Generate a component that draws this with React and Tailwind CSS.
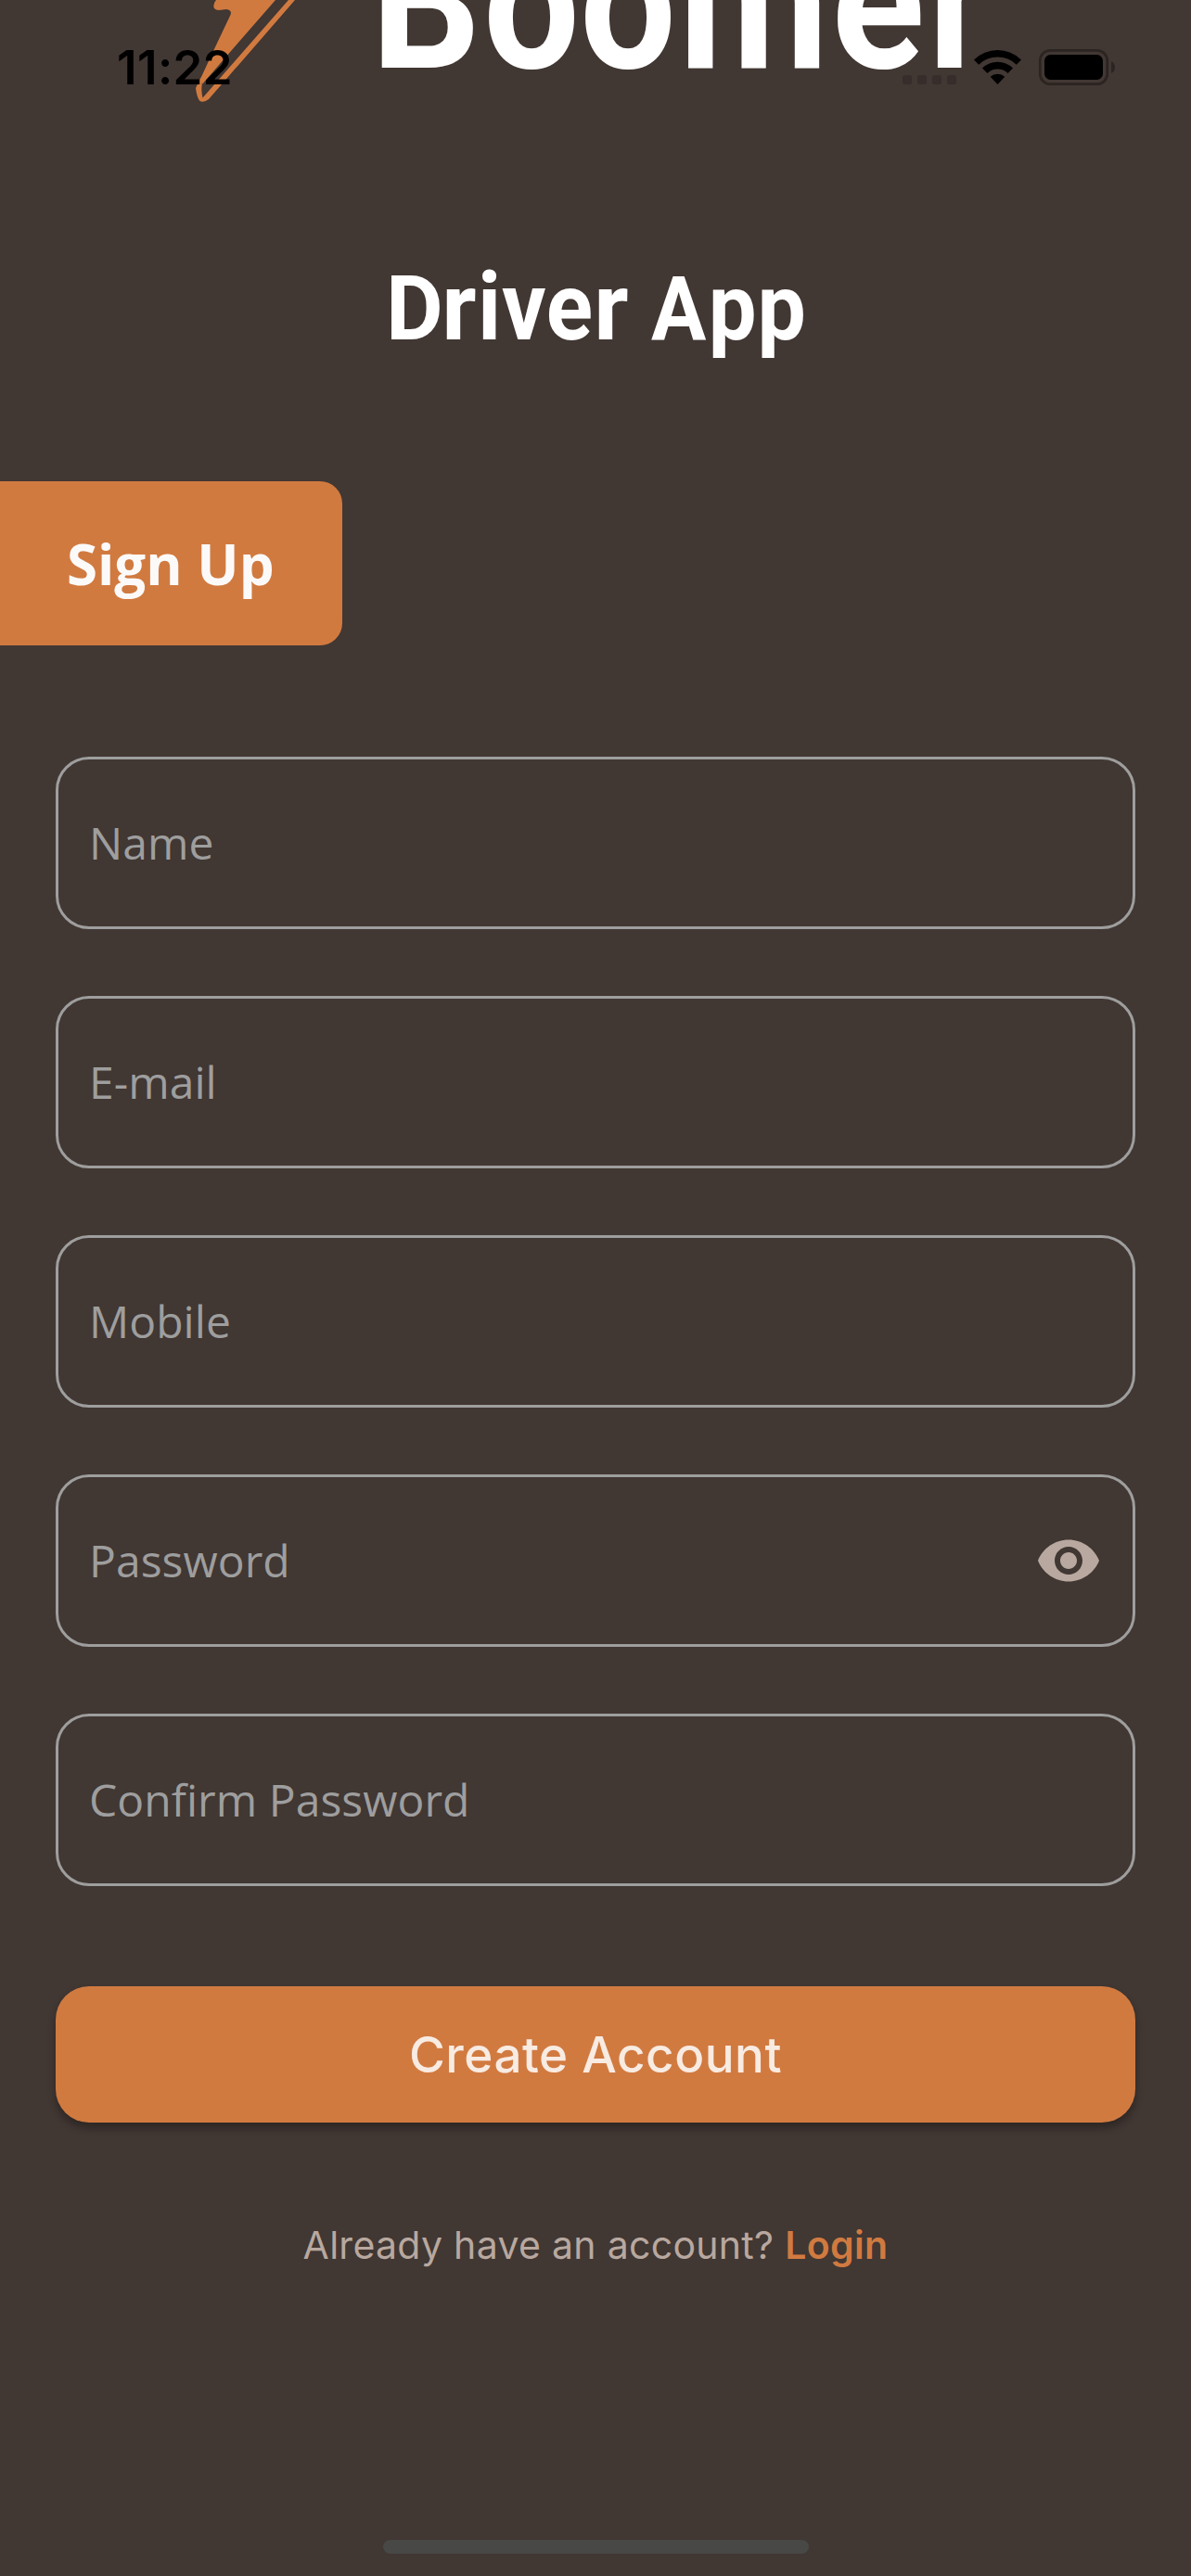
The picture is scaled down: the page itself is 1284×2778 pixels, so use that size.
import React from "react";

const fields = [
  { label: "Name" },
  { label: "E-mail" },
  { label: "Mobile" },
  { label: "Password", eye: true },
  { label: "Confirm Password" },
];

// Each glyph: character, x, horizontal scale, vertical scale
const boomer = [
  ["B", 400, 0.9, 1],
  ["o", 521.2, 0.89, 1],
  ["o", 625.2, 0.89, 1],
  ["m", 732, 0.903, 1],
  ["e", 896.8, 0.9, 1],
  ["r", 1001, 0.88, 1],
];
const driver = [
  ["D", 416, 0.98, 1],
  ["r", 476.3, 1.05, 1.06],
  ["i", 515, 0.98, 1.06],
  ["v", 541, 0.97, 1.07],
  ["e", 588.7, 0.96, 1.05],
  ["r", 640.3, 1.05, 1.06],
  ["A", 702, 0.91, 1],
  ["p", 763.7, 0.95, 1.04],
  ["p", 816.6, 0.96, 1.04],
];

function Glyphs({ list, baseline, size }) {
  return list.map(([ch, x, sx, sy], i) => (
    <text
      key={i}
      transform={`translate(${x} ${baseline}) scale(${sx} ${sy})`}
      fontSize={size}
      fontWeight="700"
      fontFamily="Roboto, sans-serif"
      fill="#fff"
    >
      {ch}
    </text>
  ));
}

function Eye() {
  return (
    <svg viewBox="0 0 24 24" className="size-[72px]" fill="#b8a89f">
      <path d="M12 4.5C7 4.5 2.73 7.61 1 12c1.73 4.39 6 7.5 11 7.5s9.27-3.11 11-7.5c-1.73-4.39-6-7.5-11-7.5zM12 17c-2.76 0-5-2.24-5-5s2.24-5 5-5 5 2.24 5 5-2.24 5-5 5zm0-8c-1.66 0-3 1.34-3 3s1.34 3 3 3 3-1.34 3-3-1.34-3-3-3z" />
    </svg>
  );
}

function StatusBar() {
  return (
    <div className="absolute inset-x-0 top-0 h-[130px]">
      <span className="absolute left-[126px] top-[42px] font-[Inter,sans-serif] text-[51px] leading-[61px] font-semibold tracking-[0.4px] text-black">
        11:22
      </span>
      <svg className="absolute left-[970px] top-[50px]" width="236" height="46" viewBox="970 50 236 46">
        <g fill="#372d2b">
          <rect x="973" y="81" width="10" height="10" rx="2.5" />
          <rect x="989" y="81" width="10" height="10" rx="2.5" />
          <rect x="1005" y="81" width="10" height="10" rx="2.5" />
          <rect x="1021" y="81" width="10" height="10" rx="2.5" />
        </g>
        <path d="M1050 64.500A36.500 36.500 0 0 1 1101 64.500L1095.800 69.700A29 29 0 0 0 1055.200 69.700Z" />
        <path d="M1059 73.500A23.500 23.500 0 0 1 1092 73.500L1086.500 79A15.800 15.800 0 0 0 1064.500 79Z" />
        <path d="M1067.700 82.800A11.500 11.500 0 0 1 1083.300 82.800L1075.500 91Z" />
        <rect x="1121.300" y="54.300" width="72.400" height="36.400" rx="11" fill="none" stroke="#2b2421" strokeWidth="2.700" />
        <rect x="1126" y="59" width="63" height="27" rx="6.500" />
        <path d="M1198 66Q1202 68 1202 72.500T1198 79Z" fill="#2b2421" />
      </svg>
    </div>
  );
}

export default function App() {
  return (
    <div className="relative flex h-[2778px] w-[1284px] flex-col overflow-hidden bg-[#413733] font-['Open_Sans',sans-serif]">
      <header className="flex h-[519px] flex-col">
        <svg width="1284" height="519" viewBox="0 0 1284 519">
          <g fill="#d17a40">
            <path d="M233 0Q229 5 231 9Q233 11.500 238 10.800L244 10Q250.500 11 248.500 16L230 55L217 83L216.500 88L218.300 90.500L246 58.500L297 0Z" />
            <path d="M318 0L225 107Q219 111.500 215 108.500Q212 104 211 95L216.700 83L217.800 91Q216.600 97 218.500 105.500L311 0Z" />
          </g>
          <Glyphs list={boomer} baseline={72.5} size={206} />
          <Glyphs list={driver} baseline={366} size={97} />
        </svg>
      </header>

      <div className="flex h-[177px] w-[369px] items-center rounded-r-[24px] bg-[#d17a40] pl-[72px] text-[60px] leading-[82px] font-bold text-[#fcfaf9]">
        Sign Up
      </div>

      <form className="mt-[120px] flex flex-col px-[60px]">
        <div className="flex flex-col gap-[72px]">
          {fields.map((f) => (
            <div
              key={f.label}
              className="flex h-[186px] items-center justify-between rounded-[36px] border-[3px] border-[#9e9e9e] px-[33px]"
            >
              <span className="text-[48px] leading-[66px] tracking-[0.05px] text-[#9e9e9e]">{f.label}</span>
              {f.eye && <Eye />}
            </div>
          ))}
        </div>
        <button
          type="button"
          className="mt-[108px] flex h-[147px] items-center justify-center rounded-[36px] bg-[#d17a40] pt-[2px] font-[Inter,sans-serif] text-[53px] font-medium tracking-[0.5px] text-[#f8ebe2] shadow-[0_6px_8px_rgba(0,0,0,0.3)]"
        >
          Create Account
        </button>
      </form>

      <p className="mt-[102px] flex justify-center gap-[12px] font-[Inter,sans-serif] text-[41px] leading-[60px] tracking-[0.3px] text-[#b8a89f]">
        <span>Already have an account?</span>
        <span className="font-semibold text-[#d17a40]">Login</span>
      </p>

      <div className="mt-auto mb-[24px] ml-[413px] h-[15px] w-[459px] rounded-full bg-[#484846]" />
      <StatusBar />
    </div>
  );
}
